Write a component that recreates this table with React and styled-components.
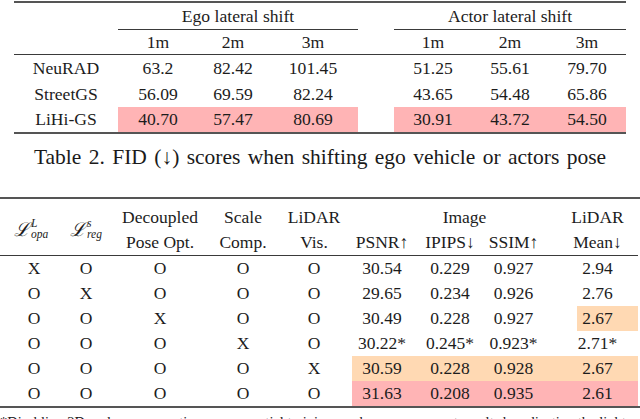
import React from 'react';
import styled, { createGlobalStyle } from 'styled-components';

const SERIF = '"Liberation Serif", "Times New Roman", serif';

const Global = createGlobalStyle`
  html, body { margin: 0; padding: 0; background: #fff; }
  body {
    font-family: ${SERIF};
    color: #1c1c1c;
  }
`;

const Page = styled.div`
  width: 640px;
  height: 419px;
  overflow: hidden;
  display: flex;
  flex-direction: column;
  font-family: ${SERIF};
`;

const colors = { pink: '#ffb4b5', peach: '#ffd9b3' };

/* ---------- Table 1 ---------- */
const T1_COLS = '104px 80px 70px 90px 36px 78px 76px 78px';

const Table1 = styled.div`
  margin: 1px 0 0 14px;
  width: 612px;
  font-size: 17.6px;
  display: flex;
  flex-direction: column;
`;

const HeavyRule = styled.div`
  height: 2px;
  background: #555;
`;

const LightRule = styled.div`
  height: 1px;
  background: #3a3a3a;
`;

const T1Row = styled.div`
  display: grid;
  grid-template-columns: ${T1_COLS};
  height: ${p => p.$h}px;
`;

const Cell = styled.div`
  display: flex;
  align-items: center;
  justify-content: center;
  white-space: nowrap;
  grid-column: ${p => p.$span || 'auto'};
  padding-right: ${p => p.$pr || 0}px;
  padding-left: ${p => p.$pl || 0}px;
  background: ${p => (p.$hl ? colors[p.$hl] : 'transparent')};
`;

const RuleSeg = styled.div`
  grid-column: ${p => p.$span};
  background: #3a3a3a;
`;

const Caption = styled.div`
  margin-top: 11px;
  text-align: center;
  font-size: 21.5px;
  word-spacing: 2px;
  line-height: 24px;
  color: #1a1a1a;
`;

/* ---------- Table 2 ---------- */
const T2_COLS = '62px 48px 100px 66px 76px 60px 76px 89px 61px';

const Table2 = styled.div`
  margin-top: 28px;
  width: 638px;
  font-size: 17.5px;
  display: flex;
  flex-direction: column;
`;

const FullRule = styled(HeavyRule)`
  width: 640px;
`;

const T2Head = styled.div`
  display: grid;
  grid-template-columns: ${T2_COLS};
  grid-template-rows: 31px 25px;
`;

const HCell = styled.div`
  display: flex;
  justify-content: center;
  align-items: ${p => (p.$tall ? 'center' : p.$top ? 'flex-end' : 'center')};
  white-space: nowrap;
  line-height: 25px;
  grid-column: ${p => p.$col};
  grid-row: ${p => p.$row};
  padding-right: ${p => p.$pr || 0}px;
  padding-top: ${p => (p.$tall ? 4 : 0)}px;
`;

const T2Row = styled.div`
  display: grid;
  grid-template-columns: ${T2_COLS};
  height: 25px;
`;

const MathExpr = styled.span`
  display: inline-flex;
  align-items: center;
  font-style: italic;
`;

const ScriptL = styled.span`
  font-family: "DejaVu Serif", serif;
  font-style: italic;
  font-size: 19px;
`;

const SupSub = styled.span`
  display: inline-flex;
  flex-direction: column;
  font-size: 11.5px;
  line-height: 11px;
  margin-left: 1px;
  font-style: italic;
`;

const Footnote = styled.div`
  margin-top: 5px;
  font-size: 14.5px;
  line-height: 18px;
  white-space: nowrap;
  color: #1a1a1a;
`;

const t1Rows = [
  { name: 'NeuRAD', ego: ['63.2', '82.42', '101.45'], actor: ['51.25', '55.61', '79.70'], h: 26 },
  { name: 'StreetGS', ego: ['56.09', '69.59', '82.24'], actor: ['43.65', '54.48', '65.86'], h: 26 },
  { name: 'LiHi-GS', ego: ['40.70', '57.47', '80.69'], actor: ['30.91', '43.72', '54.50'], h: 25, hl: 'pink' },
];

const t2Rows = [
  { f: ['X', 'O', 'O', 'O', 'O'], v: ['30.54', '0.229', '0.927', '2.94'] },
  { f: ['O', 'X', 'O', 'O', 'O'], v: ['29.65', '0.234', '0.926', '2.76'] },
  { f: ['O', 'O', 'X', 'O', 'O'], v: ['30.49', '0.228', '0.927', '2.67'], hl: [null, null, null, 'peach'] },
  { f: ['O', 'O', 'O', 'X', 'O'], v: ['30.22*', '0.245*', '0.923*', '2.71*'] },
  { f: ['O', 'O', 'O', 'O', 'X'], v: ['30.59', '0.228', '0.928', '2.67'], hl: ['peach', 'peach', 'peach', 'peach'] },
  { f: ['O', 'O', 'O', 'O', 'O'], v: ['31.63', '0.208', '0.935', '2.61'], hl: ['pink', 'pink', 'pink', 'pink'] },
];

const valuePad = [0, 0, 38, 20];
const flagPad = [6, 0, 0, 0, 0];

function Loss({ sup, sub }) {
  return (
    <MathExpr>
      <ScriptL>ℒ</ScriptL>
      <SupSub>
        <span>{sup}</span>
        <span>{sub}</span>
      </SupSub>
    </MathExpr>
  );
}

export default function App() {
  return (
    <Page>
      <Global />
      <Table1>
        <HeavyRule />
        <T1Row $h={26}>
          <Cell />
          <Cell $span="2 / 5">Ego lateral shift</Cell>
          <Cell />
          <Cell $span="6 / 9">Actor lateral shift</Cell>
        </T1Row>
        <T1Row $h={1}>
          <RuleSeg $span="2 / 5" />
          <RuleSeg $span="6 / 9" />
        </T1Row>
        <T1Row $h={24}>
          <Cell />
          <Cell>1m</Cell>
          <Cell>2m</Cell>
          <Cell>3m</Cell>
          <Cell />
          <Cell>1m</Cell>
          <Cell>2m</Cell>
          <Cell>3m</Cell>
        </T1Row>
        <LightRule />
        {t1Rows.map(r => (
          <T1Row key={r.name} $h={r.h}>
            <Cell>{r.name}</Cell>
            {r.ego.map((v, i) => (
              <Cell key={'e' + i} $hl={r.hl}>{v}</Cell>
            ))}
            <Cell />
            {r.actor.map((v, i) => (
              <Cell key={'a' + i} $hl={r.hl}>{v}</Cell>
            ))}
          </T1Row>
        ))}
        <HeavyRule />
      </Table1>

      <Caption>Table 2. FID (↓) scores when shifting ego vehicle or actors pose</Caption>

      <Table2>
        <FullRule />
        <T2Head>
          <HCell $col="1" $row="1 / 3" $tall><Loss sup="L" sub="opa" /></HCell>
          <HCell $col="2" $row="1 / 3" $tall><Loss sup="s" sub="reg" /></HCell>
          <HCell $col="3" $row="1" $top>Decoupled</HCell>
          <HCell $col="3" $row="2">Pose Opt.</HCell>
          <HCell $col="4" $row="1" $top>Scale</HCell>
          <HCell $col="4" $row="2">Comp.</HCell>
          <HCell $col="5" $row="1" $top>LiDAR</HCell>
          <HCell $col="5" $row="2">Vis.</HCell>
          <HCell $col="6 / 9" $row="1" $top>Image</HCell>
          <HCell $col="6" $row="2">PSNR↑</HCell>
          <HCell $col="7" $row="2">IPIPS↓</HCell>
          <HCell $col="8" $row="2" $pr={38}>SSIM↑</HCell>
          <HCell $col="9" $row="1" $top $pr={20}>LiDAR</HCell>
          <HCell $col="9" $row="2" $pr={20}>Mean↓</HCell>
        </T2Head>
        <LightRule />
        {t2Rows.map((r, ri) => (
          <T2Row key={ri}>
            {r.f.map((f, i) => (
              <Cell key={'f' + i} $pl={flagPad[i]}>{f}</Cell>
            ))}
            {r.v.map((v, i) => (
              <Cell key={'v' + i} $pr={valuePad[i]} $hl={r.hl ? r.hl[i] : null}>{v}</Cell>
            ))}
          </T2Row>
        ))}
        <FullRule />
      </Table2>
      <Footnote>*Disabling 2D scale compensation causes partial training crashes, so we report results by adjusting the lights and weights</Footnote>
    </Page>
  );
}
